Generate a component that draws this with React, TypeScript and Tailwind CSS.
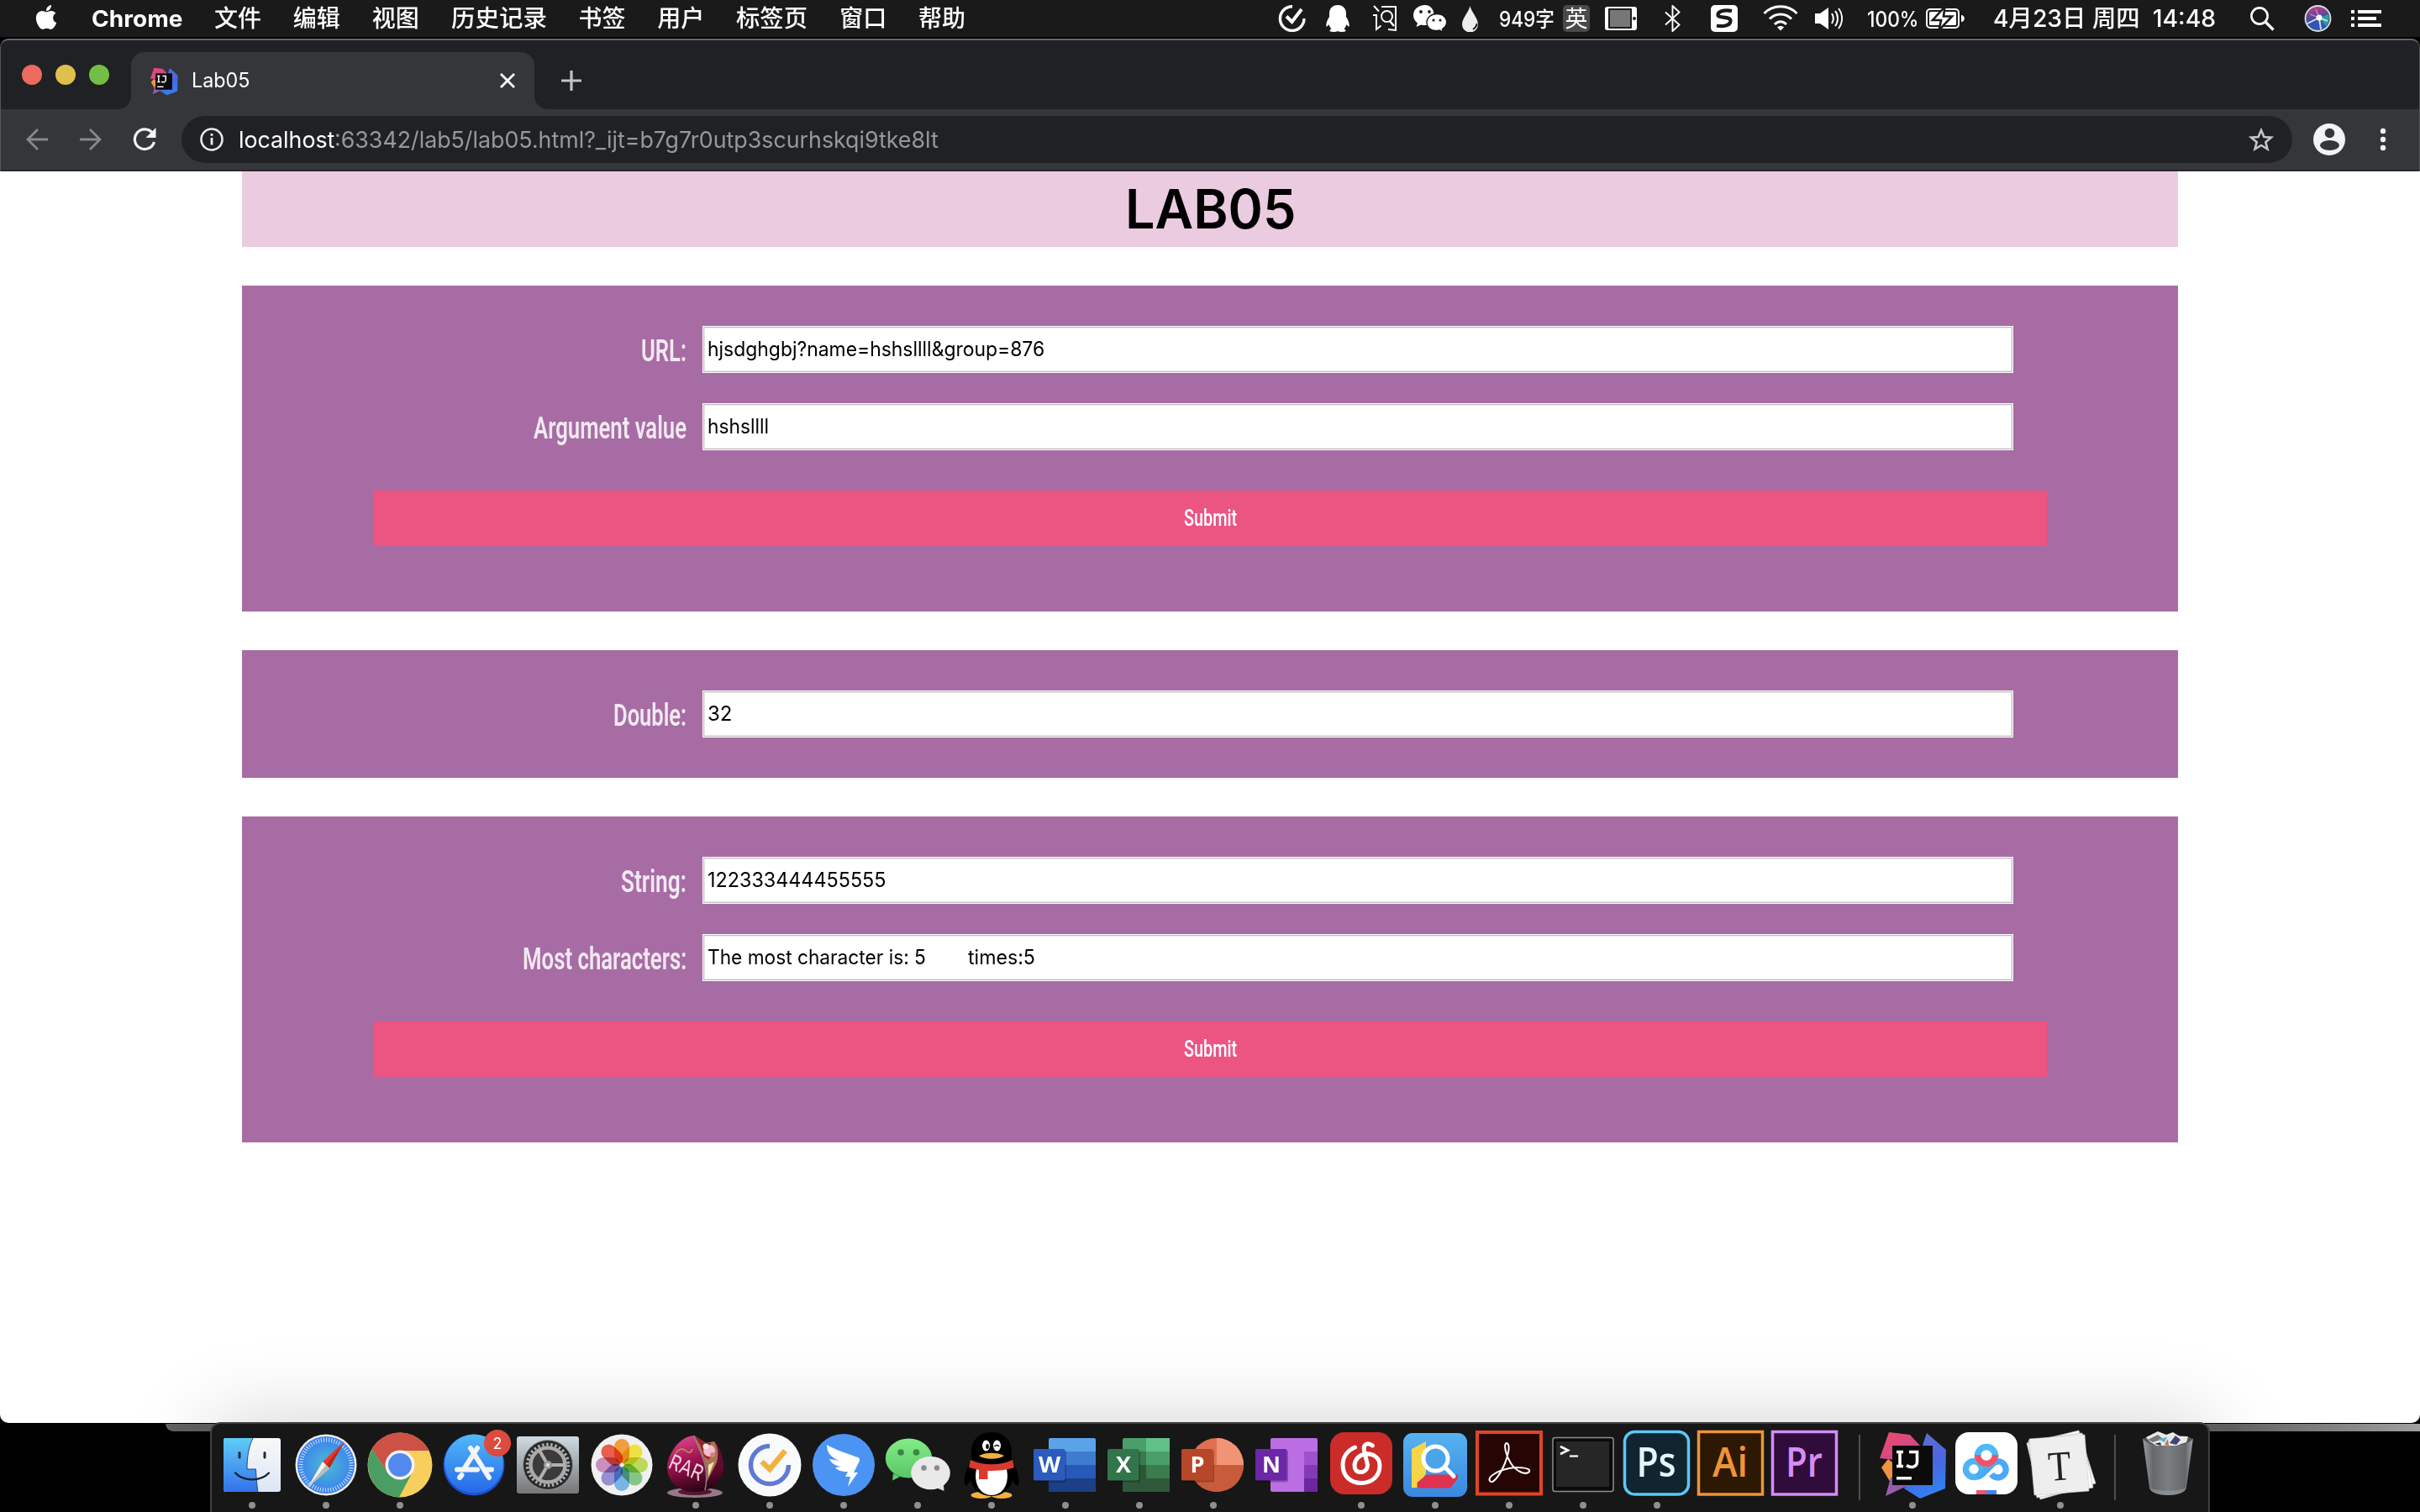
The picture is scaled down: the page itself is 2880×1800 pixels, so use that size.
import { useLayoutEffect, useRef, useState } from 'react';
import type { ReactNode } from 'react';
import { FaApple } from 'react-icons/fa';

/** Text stretched horizontally so that it fills a given width. */
function Fit({ w, children, className = '' }: { w: number; children: string; className?: string }) {
  const ref = useRef<HTMLSpanElement>(null);
  const [scale, setScale] = useState(1);
  useLayoutEffect(() => {
    if (ref.current) setScale(w / ref.current.offsetWidth);
  }, [w]);
  return (
    <span className="inline-block shrink-0 whitespace-pre" style={{ width: w }}>
      <span ref={ref} className={`inline-block origin-left ${className}`} style={{ transform: `scaleX(${scale})` }}>
        {children}
      </span>
    </span>
  );
}

/* ---------- Menu bar ---------- */

const menus: [string, number][] = [
  ['文件', 56], ['编辑', 56], ['视图', 56], ['历史记录', 114], ['书签', 56],
  ['用户', 56], ['标签页', 85], ['窗口', 56], ['帮助', 56],
];

function MenuBar() {
  return (
    <header className="flex h-11 shrink-0 items-center bg-[#1a1a1a] text-[28px] font-medium leading-none text-white">
      <FaApple className="-mt-1 ml-[39px] h-[33px] w-8 shrink-0" />
      <div className="ml-[38px] flex items-center gap-[37.9px]">
        <Fit w={108} className="text-[27px] font-bold">Chrome</Fit>
        {menus.map(([m, w]) => (
          <Fit key={m} w={w}>{m}</Fit>
        ))}
      </div>
      <div className="ml-auto flex items-center pr-[46px]">
        <svg className="h-8 w-[33px]" viewBox="0 0 33 32" fill="none" stroke="#fff">
          <path d="M17 1.8 A14.3 14.3 0 1 0 31 16" strokeWidth="3.4" />
          <path d="M10 13.5 L16.5 20 L28 5" strokeWidth="4" />
        </svg>
        <svg className="ml-6 h-8 w-7" viewBox="0 0 28 32" fill="#fff">
          <path d="M14 0 C7.5 0 4 4.5 4 10 L4 14 C2 17 0 21 .3 25.5 C1.5 26 3 24 3.6 23 C4.2 25.5 5 27 6.5 28.4 C4.6 29.3 4 30.5 5 31.5 C8 32.3 12 32 14 31 C16 32 20 32.3 23 31.5 C24 30.5 23.4 29.3 21.5 28.4 C23 27 23.8 25.5 24.4 23 C25 24 26.5 26 27.7 25.5 C28 21 26 17 24 14 L24 10 C24 4.5 20.5 0 14 0Z" />
        </svg>
        <svg className="ml-[27px] h-8 w-[30px]" viewBox="0 0 30 32" fill="none" stroke="#fff" strokeWidth="2">
          <path d="M2 1 L8 7.500 M1 12 H5 V29 L10.500 24.500 M11 2 H28 V30 L19 29" />
          <circle cx="17.500" cy="13.500" r="6.500" />
          <path d="M21 19 L26 25" strokeWidth="2.500" />
        </svg>
        <svg className="ml-[19px] h-8 w-10" viewBox="0 0 40 32">
          <path d="M14 0 C6 0 0 5 0 12 C0 16 2 19.500 5 21.500 L3.500 26 L9 23.500 C11 24 13 24.200 15 24 C28 24 28 0 14 0Z" fill="#fff" />
          <circle cx="9" cy="8" r="1.900" fill="#1a1a1a" /><circle cx="19" cy="8" r="1.900" fill="#1a1a1a" />
          <path d="M28 10.500 C21 10.500 16 15 16 20.500 C16 28 23 32 31 30 L35.500 32 L34.500 28.500 C44 22 39 10.500 28 10.500Z" fill="#fff" stroke="#1a1a1a" strokeWidth="1.400" />
          <circle cx="24" cy="18" r="1.600" fill="#1a1a1a" /><circle cx="32" cy="18" r="1.600" fill="#1a1a1a" />
        </svg>
        <svg className="ml-[18px] h-8 w-[19px]" viewBox="0 0 19 32">
          <path d="M9.500 1 C8 8 0 16 0 23 A9.300 9.300 0 0 0 19 23 C19 16 11 8 9.500 1Z" fill="#eee" />
          <path d="M13 29 C16 27 17.500 25 17.500 22" stroke="#1a1a1a" strokeWidth="2" fill="none" />
        </svg>
        <div className="ml-[25px] flex"><Fit w={66} className="text-[25px]">949字</Fit></div>
        <div className="ml-2.5 flex h-8 w-8 items-center justify-center rounded-[5px] bg-[#4a4a4a] text-[27px] font-normal">英</div>
        <svg className="ml-[18px] h-8 w-[38px]" viewBox="0 0 38 32">
          <rect x="0" y="2" width="38" height="28" rx="3" fill="#fff" />
          <rect x="4" y="4" width="28" height="24" rx="1" fill="#1a1a1a" />
          <rect x="6" y="6" width="24" height="20" fill="#777" />
          <circle cx="35" cy="16" r="2" fill="#1a1a1a" />
        </svg>
        <svg className="ml-[33px] h-8 w-[19px]" viewBox="0 0 19 32" fill="none" stroke="#fff" strokeWidth="1.900">
          <path d="M1 8.500 L17.500 23.500 L9.500 31 V1 L17.500 8.500 L1 23.500" />
        </svg>
        <svg className="ml-9 h-8 w-8" viewBox="0 0 32 32">
          <rect width="32" height="32" rx="5" fill="#fff" />
          <path d="M25 7 C15 5 8 8 8.500 12 C9 16 24 13 23.500 19 C23 25 14 26 7 24.500" stroke="#1a1a1a" strokeWidth="4.200" fill="none" />
        </svg>
        <svg className="ml-[30px] h-8 w-[42px]" viewBox="0 0 42 32" fill="none" stroke="#fff" strokeWidth="3">
          <path d="M1.500 10 C12 -1 30 -1 40.500 10 M8 16.500 C15 9 27 9 34 16.500 M14 23 C18 18.500 24 18.500 28 23" />
          <path d="M21 30.500 L17 26.500 C19 24.500 23 24.500 25 26.500Z" fill="#fff" stroke="none" />
        </svg>
        <svg className="ml-5 h-8 w-[33px]" viewBox="0 0 33 32" fill="none" stroke="#fff" strokeWidth="2">
          <path d="M0 10 H6 L16 3 V29 L6 22 H0Z" fill="#fff" stroke="none" />
          <path d="M20 10 C22.500 14 22.500 18 20 22 M24 7 C28 12 28 20 24 25 M28 4 C33.500 11 33.500 21 28 28" />
        </svg>
        <div className="ml-[29px] flex"><Fit w={61} className="text-[25px]">100%</Fit></div>
        <svg className="ml-[9px] h-8 w-[46px]" viewBox="0 0 46 32">
          <rect x="1" y="5" width="38" height="22" rx="4" fill="none" stroke="#fff" strokeWidth="2" />
          <rect x="4" y="8" width="32" height="16" rx="1.500" fill="#fff" />
          <path d="M42 12 C47 12 47 20 42 20Z" fill="#fff" />
          <path d="M22.500 2 L8 18 H18 L15.500 30 L31 13.500 H21Z" fill="#fff" stroke="#1a1a1a" strokeWidth="2.600" />
        </svg>
        <div className="ml-[34px] flex"><Fit w={265} className="text-[28px]">4月23日 周四  14:48</Fit></div>
        <svg className="ml-[41px] h-8 w-[29px]" viewBox="0 0 29 32" fill="none" stroke="#fff" strokeWidth="2.600">
          <circle cx="11" cy="13" r="9.600" />
          <path d="M18 20 L27.500 29.500" strokeWidth="3.200" />
        </svg>
        <svg className="ml-[35px] h-8 w-[33px]" viewBox="0 0 33 32">
          <defs>
            <linearGradient id="siri" x1="0.400" y1="0" x2="0.600" y2="1">
              <stop offset="0" stopColor="#c43a8c" /><stop offset="0.450" stopColor="#4a4c9c" /><stop offset="1" stopColor="#1d5fc0" />
            </linearGradient>
          </defs>
          <circle cx="16.500" cy="16" r="15" fill="url(#siri)" stroke="#ddd" strokeWidth="1.800" />
          <path d="M18 15 L29 11 C31 17 28 23 26 25Z" fill="#2f9d97" />
          <path d="M18 15 L4 22 M18 15 L20 29 M18 15 L28 19" stroke="#d8e4ff" strokeWidth="1.800" />
          <path d="M18 15 L14 5 M18 15 L7 11" stroke="#e88ac8" strokeWidth="1.200" />
          <circle cx="18" cy="15" r="3.500" fill="#fff" />
        </svg>
        <svg className="ml-[23px] h-8 w-9" viewBox="0 0 36 32" fill="#fff">
          <path d="M0 6h4v4H0z M8 6h28v4H8z M0 14h4v4H0z M8 14h22v4H8z M0 22h4v4H0z M8 22h28v4H8z" />
        </svg>
      </div>
    </header>
  );
}

/* ---------- Browser chrome ---------- */

function IdeaLogo({ className }: { className: string }) {
  return (
    <svg className={className} viewBox="-44 -48 88 92">
      <defs>
        <linearGradient id="ijBlue" x1="0.300" y1="0" x2="0.600" y2="1">
          <stop offset="0" stopColor="#5f6fd0" /><stop offset="0.500" stopColor="#4a66e0" /><stop offset="1" stopColor="#2f83f2" />
        </linearGradient>
        <linearGradient id="ijRed" x1="0" y1="0" x2="1" y2="1">
          <stop offset="0" stopColor="#f5496b" /><stop offset="1" stopColor="#b24a9c" />
        </linearGradient>
        <linearGradient id="ijPurple" x1="0" y1="1" x2="1" y2="0">
          <stop offset="0" stopColor="#a55bb0" /><stop offset="1" stopColor="#7c5aa8" />
        </linearGradient>
      </defs>
      <path d="M-37 3 L-29 -7 L-20 0 V24 L-26 21Z" fill="#ef9440" />
      <path d="M17 -38 L40 -18 L39 28 L9 40 L-10 28 L4 0Z" fill="url(#ijBlue)" />
      <path d="M-28 -39 L-3 -36 L10 -22 L4 0 L-20 -6 L-39 -8Z" fill="url(#ijRed)" />
      <path d="M-26 15 L-32 37 L0 22 V10Z" fill="url(#ijPurple)" />
      <rect x="-24" y="-23" width="48" height="47" fill="#0b0b0b" />
      <path d="M-19 -15.500 H-11 M-15 -15.500 V1.500 M-19 1.500 H-11 M-4 -15.500 H5.500 V-4 C5.500 3 -2 4 -7 0.500" fill="none" stroke="#fff" strokeWidth="3.600" />
      <rect x="-19" y="14" width="18" height="3.500" fill="#fff" />
    </svg>
  );
}

function BrowserChrome() {
  return (
    <div className="flex h-[158px] shrink-0 flex-col rounded-t-[10px] border-x border-t-2 border-x-[#55565a] border-t-[#666] bg-[#202124]">
      <div className="flex h-[82px] shrink-0">
        <div className="mt-[29px] ml-[25px] flex gap-4">
          <span className="size-6 rounded-full bg-[#ed6a5e]" />
          <span className="size-6 rounded-full bg-[#e0c04c]" />
          <span className="size-6 rounded-full bg-[#72be47]" />
        </div>
        <div className="mt-3.5 ml-2.5 flex">
          <svg className="mt-[52px] size-4" viewBox="0 0 16 16"><path d="M16 0 V16 H0 A16 16 0 0 0 16 0Z" fill="#35363a" /></svg>
          <div className="flex h-[70px] w-[480px] items-center rounded-t-2xl bg-[#35363a] pr-[23px] pl-5 pb-0.5 text-2xl leading-none text-white">
            <IdeaLogo className="size-[38px]" />
            <div className="ml-[14px] flex"><Fit w={69}>Lab05</Fit></div>
            <svg className="ml-auto size-[18px]" viewBox="0 0 18 18" stroke="#fff" strokeWidth="2.800"><path d="M1 1 L17 17 M17 1 L1 17" /></svg>
          </div>
          <svg className="mt-[52px] size-4" viewBox="0 0 16 16"><path d="M0 0 V16 H16 A16 16 0 0 1 0 0Z" fill="#35363a" /></svg>
        </div>
        <svg className="mt-9 ml-4 size-6" viewBox="0 0 24 24" stroke="#c3c4c7" strokeWidth="3.200"><path d="M12 0 V24 M0 12 H24" /></svg>
      </div>
      <div className="flex h-[74px] shrink-0 items-center border-b-2 border-[#28292c] bg-[#35363a]">
        <svg className="ml-[30px] size-[26px]" viewBox="0 0 26 26" fill="none" stroke="#87888b" strokeWidth="2.800"><path d="M26 13 H2 M14 1 L2 13 L14 25" /></svg>
        <svg className="ml-[38px] size-[26px]" viewBox="0 0 26 26" fill="none" stroke="#87888b" strokeWidth="2.800"><path d="M0 13 H24 M12 1 L24 13 L12 25" /></svg>
        <svg className="ml-[37px] size-[28px]" viewBox="0 0 28 28" fill="none" stroke="#f1f3f4" strokeWidth="3.200">
          <path d="M23.500 6.500 A11.800 11.800 0 1 0 25.500 17" />
          <path d="M27.500 0 V12 H15.500Z" fill="#f1f3f4" stroke="none" />
        </svg>
        <div className="ml-[30px] flex h-14 w-[2512px] items-center rounded-full bg-[#202124] pr-[22px] pl-[22px] text-[27px] leading-none">
          <svg className="size-7" viewBox="0 0 28 28" fill="none" stroke="#e8eaed" strokeWidth="2.600">
            <circle cx="14" cy="14" r="12.500" /><path d="M14 12 V20.500 M14 7 V9.800" strokeWidth="2.800" />
          </svg>
          <div className="ml-[18px] flex">
            <Fit w={114} className="text-white">localhost</Fit>
            <Fit w={719} className="text-[#97989b]">:63342/lab5/lab05.html?_ijt=b7g7r0utp3scurhskqi9tke8lt</Fit>
          </div>
          <svg className="ml-auto h-7 w-[30px]" viewBox="0 0 30 28" fill="none" stroke="#c3c4c7" strokeWidth="2.600">
            <path d="M15 3 L18.400 11 L27 11.600 L20.300 17.200 L22.500 25.500 L15 21 L7.500 25.500 L9.700 17.200 L3 11.600 L11.600 11Z" />
          </svg>
        </div>
        <svg className="ml-[25px] size-[38px]" viewBox="0 0 38 38">
          <circle cx="19" cy="19" r="19" fill="#f1f3f4" />
          <circle cx="19.500" cy="11.500" r="5.800" fill="#35363a" />
          <ellipse cx="19.500" cy="26" rx="11.500" ry="6" fill="#35363a" />
        </svg>
        <svg className="ml-[41px] h-7 w-2" viewBox="0 0 8 28" fill="#f1f3f4"><circle cx="4" cy="4" r="3.200" /><circle cx="4" cy="14" r="3.200" /><circle cx="4" cy="24" r="3.200" /></svg>
      </div>
    </div>
  );
}

/* ---------- Page ---------- */

function Field({ label, labelWidth, children }: { label: string; labelWidth: number; children: ReactNode }) {
  return (
    <div className="flex h-14 items-center">
      <div className="mt-[3px] flex w-[529px] justify-end font-[Roboto] text-[37px] leading-none font-semibold text-[#f1e9f1]">
        <Fit w={labelWidth}>{label}</Fit>
      </div>
      <div className="ml-[19px] flex h-14 w-[1560px] items-center border border-white bg-white pb-px pl-[5px] text-[24px] leading-none text-black shadow-[inset_0_0_0_1px_#bdbdbd,inset_0_0_0_2px_#ebebeb]">
        {children}
      </div>
    </div>
  );
}

function SubmitButton() {
  return (
    <button className="mt-3 ml-[156px] flex h-[66px] w-[1992px] items-center justify-center bg-[#ec5482] font-[Roboto] text-[28px] leading-none font-medium text-white">
      <Fit w={63}>Submit</Fit>
    </button>
  );
}

function Page() {
  return (
    <main className="flex h-[1490px] flex-col gap-[46px] rounded-b-[10px] bg-white px-72">
      <h1 className="flex h-[90px] items-center justify-center bg-[#ebcbdf] text-[64px] leading-none text-black">
        <Fit w={203} className="font-semibold">LAB05</Fit>
      </h1>
      <section className="flex flex-col gap-9 bg-[#a86ca4] pt-12 pb-[78px]">
        <Field label="URL:" labelWidth={54}><Fit w={401}>hjsdghgbj?name=hshsllll&group=876</Fit></Field>
        <Field label="Argument value" labelWidth={182}><Fit w={73}>hshsllll</Fit></Field>
        <SubmitButton />
      </section>
      <section className="flex flex-col bg-[#a86ca4] py-12">
        <Field label="Double:" labelWidth={87}><Fit w={29}>32</Fit></Field>
      </section>
      <section className="flex flex-col gap-9 bg-[#a86ca4] pt-12 pb-[78px]">
        <Field label="String:" labelWidth={78}><Fit w={212}>122333444455555</Fit></Field>
        <Field label="Most characters:" labelWidth={195}>
          <Fit w={260}>The most character is: 5</Fit>
          <div className="ml-[50px] flex"><Fit w={80}>times:5</Fit></div>
        </Field>
        <SubmitButton />
      </section>
    </main>
  );
}

/* ---------- Dock ---------- */

const V = '-44 -48 88 92';
const box = 'h-[92px] w-[88px] shrink-0';

const Finder = () => (
  <svg className={box} viewBox={V}>
    <defs>
      <linearGradient id="fL" x1="0" y1="0" x2="0" y2="1"><stop offset="0" stopColor="#5fcdf8" /><stop offset="1" stopColor="#3372ea" /></linearGradient>
      <linearGradient id="fR" x1="0" y1="0" x2="0" y2="1"><stop offset="0" stopColor="#f8f8f8" /><stop offset="1" stopColor="#dce7f5" /></linearGradient>
    </defs>
    <rect x="-34" y="-32" width="68" height="64" rx="3" fill="url(#fR)" />
    <path d="M1 -32 H-31 Q-34 -32 -34 -29 V29 Q-34 32 -31 32 H7 C5.500 24 5 15 4.500 5 H-6 C-6 -10 -4 -22 1 -32Z" fill="url(#fL)" />
    <path d="M1 -32 C-4 -22 -6 -10 -6 5 H4.500 C5 15 5.500 24 7 32" fill="none" stroke="#1d4b80" strokeWidth="1" />
    <path d="M-15 -14.500 V-9 M15 -14.500 V-9" stroke="#1b2a38" strokeWidth="3" strokeLinecap="round" />
    <path d="M-20 9.500 C-10 20 10 20 20 9.500" fill="none" stroke="#16202b" strokeWidth="2.400" strokeLinecap="round" />
  </svg>
);

const Safari = () => (
  <svg className={box} viewBox={V}>
    <defs><radialGradient id="sf"><stop offset="0" stopColor="#4dbcd0" /><stop offset="1" stopColor="#3a7ff0" /></radialGradient></defs>
    <circle r="36.500" fill="#ececec" /><circle r="34" fill="url(#sf)" />
    <circle r="30" fill="none" stroke="#cfe6fb" strokeWidth="5" strokeDasharray="1 2.140" />
    <path d="M22 -28 L-4 -4 L4 4Z" fill="#e5392f" /><path d="M22 -28 L4 4 L0 0Z" fill="#b92920" />
    <path d="M-22 27 L-4 -4 L4 4Z" fill="#f4f4f4" /><path d="M-22 27 L0 0 L4 4Z" fill="#bbb" />
  </svg>
);

const Chrome = () => (
  <svg className={box} viewBox={V}>
    <circle r="38.500" fill="#f8cf5c" />
    <path d="M-33 -19 A38.500 38.500 0 0 0 -1 38.500 L15 8.500 L0 17 L-15 8.500Z" fill="#4a9e63" />
    <path d="M-33.300 -19.250 A38.500 38.500 0 0 1 34.500 -17 H0 L-15 8.500Z" fill="#cd5145" />
    <circle r="17.500" fill="#f4f4f4" /><circle r="14" fill="#5489ee" />
  </svg>
);

const AppStore = () => (
  <svg className={box} viewBox={V}>
    <defs><linearGradient id="as" x1="0" y1="0" x2="0" y2="1"><stop offset="0" stopColor="#51b9f8" /><stop offset="1" stopColor="#2668ea" /></linearGradient></defs>
    <circle r="36.500" fill="#1b50cf" /><circle cy="-1.500" r="35" fill="url(#as)" />
    <g stroke="#f2f4f8" strokeWidth="6" strokeLinecap="round">
      <path d="M4 -20 L-12 5 M-4 -20 L18 15 M-20 5.500 H4 M14 5.500 H21 M-14.500 12 L-17 15" />
    </g>
    <circle cx="28" cy="-26" r="16" fill="#dd4a3e" />
    <text x="28" y="-19.500" textAnchor="middle" fontSize="18" fill="#fff" fontFamily="Inter">2</text>
  </svg>
);

const Settings = () => (
  <svg className={box} viewBox={V}>
    <defs><linearGradient id="st" x1="0" y1="0" x2="0" y2="1"><stop offset="0" stopColor="#cfdbe3" /><stop offset="1" stopColor="#767675" /></linearGradient></defs>
    <rect x="-37" y="-34" width="74" height="68" rx="3" fill="url(#st)" />
    <circle r="29.500" fill="#2a2a2a" stroke="#8d959c" strokeWidth="1" />
    <circle r="24.500" fill="none" stroke="#b4b4b4" strokeWidth="3.500" strokeDasharray="2.500 2.630" />
    <circle r="20.500" fill="#3b3b3b" stroke="#aaa" strokeWidth="4.500" />
    <path d="M0 0 L21 0 M0 0 L-10.500 -18 M0 0 L-10.500 18" stroke="#b0b0b0" strokeWidth="4" />
    <circle r="5" fill="#999" /><circle r="2.200" fill="#ddd" />
  </svg>
);

const petals: [number, string][] = [
  [0, '#f2932a'], [45, '#f0dd2f'], [90, '#b5d64a'], [135, '#79c17c'], [180, '#6aaee6'], [225, '#8a86cc'], [270, '#c485b8'], [315, '#e64f3c'],
];
const Photos = () => (
  <svg className={box} viewBox={V}>
    <circle r="36.500" fill="#f0f0f0" />
    <g className="isolate">
      {petals.map(([a, c]) => (
        <rect key={a} className="mix-blend-multiply" x="-9" y="-31" width="18" height="29" rx="9" fill={c} opacity="0.900" transform={`rotate(${a})`} />
      ))}
    </g>
    <circle r="2" fill="#fff" />
  </svg>
);

const Rar = () => (
  <svg className={box} viewBox={V}>
    <defs>
      <linearGradient id="rr" x1="0.200" y1="0" x2="0.500" y2="1"><stop offset="0" stopColor="#e04a92" /><stop offset="0.450" stopColor="#a01253" /><stop offset="1" stopColor="#2c0314" /></linearGradient>
    </defs>
    <ellipse cx="-1" cy="33" rx="33" ry="6" fill="#9a7686" /><ellipse cx="-1" cy="32" rx="20" ry="4" fill="#4d1a30" />
    <path d="M-2 -35 C-20 -34 -34 -12 -34 3 C-34 20 -20 32 -1 32 C18 32 33 20 33 3 C33 -10 28 -22 22 -28 L12 -26Z" fill="url(#rr)" />
    <path d="M-2 -35 L12 -26 L22 -28 C28 -20 27 -8 25 -3 L13 20 C15 5 10 -10 4 -18Z" fill="#a8744f" />
    <path d="M-2 -35 L5 -24 L10 -10 L16 -6 L18 -26 L12 -26Z" fill="#9c2028" />
    <path d="M25 -3 C22 8 16 18 13 24 C17 16 19 8 33 3 C33 -10 28 -22 22 -28 C28 -20 27 -8 25 -3Z" fill="#5c0d30" />
    <path d="M-2 -35 C2 -20 18 0 11 30" fill="none" stroke="#8d8088" strokeWidth="1.500" />
    <circle cx="16" cy="-17" r="7" fill="#f3bcc9" /><circle cx="12" cy="-22" r="3.500" fill="#fbe3e8" /><circle cx="20" cy="-12" r="3" fill="#dd7890" />
    <path d="M15 0 L22 -4 L15 14Z" fill="#f3e3b8" />
    <path d="M-24 -14 Q-18 -22 -12 -17 T-4 -19" fill="none" stroke="#b6a23b" strokeWidth="1.500" />
    <g transform="translate(-34 3) rotate(23)"><text x="0" y="0" fontSize="25" textLength="42" lengthAdjust="spacingAndGlyphs" fontFamily="Inter" fill="#f3cfe0">RAR</text></g>
  </svg>
);

const Tick = () => (
  <svg className={box} viewBox={V}>
    <circle r="37.500" fill="#f9fafb" />
    <path d="M0 -22.500 A22.500 22.500 0 1 0 22.500 0" fill="none" stroke="#6079d4" strokeWidth="5.500" />
    <path d="M-9.500 -4 L0 5 L18.500 -17" fill="none" stroke="#f3b03f" strokeWidth="6.500" />
  </svg>
);

const Ding = () => (
  <svg className={box} viewBox={V}>
    <circle r="37" fill="#4c94f3" />
    <path d="M-20 -24 C-8 -17 6 -13 17 -9 Q20 -8 18.500 -4 L12 9 H17 L5 26 L8 14 H2 L5 8 C-3 8 -8 6 -10 3 L-3 2 C-11 1 -15 -3 -17 -7 L-5 -5 C-15 -9 -20 -14 -20 -24Z" fill="#fff" />
  </svg>
);

const WeChat = () => (
  <svg className={box} viewBox={V}>
    <defs><linearGradient id="wc" x1="0" y1="0" x2="0" y2="1"><stop offset="0" stopColor="#85ec87" /><stop offset="1" stopColor="#57c766" /></linearGradient></defs>
    <path d="M-29 10 L-30 18.500 L-21 14Z" fill="#5ccb6b" />
    <ellipse cx="-10.500" cy="-8" rx="27.700" ry="23.500" fill="url(#wc)" />
    <circle cx="-20" cy="-15" r="3.800" fill="#3b8547" /><circle cx="-1.500" cy="-15" r="3.800" fill="#3b8547" />
    <path d="M31 24 L31.500 31 L22 27Z" fill="#ddd" />
    <ellipse cx="15.500" cy="9.500" rx="23.300" ry="19.700" fill="#e9e9e9" />
    <circle cx="7.500" cy="3.500" r="3.200" fill="#8b8b8b" /><circle cx="23" cy="3.500" r="3.200" fill="#8b8b8b" />
  </svg>
);

const Qq = () => (
  <svg className={box} viewBox={V}>
    <ellipse cx="-12" cy="36" rx="12.500" ry="4" fill="#efb040" /><ellipse cx="12" cy="36" rx="12.500" ry="4" fill="#efb040" />
    <path d="M0 -39 C-17 -39 -24 -27 -24 -15 V-6 C-29 2 -34 14 -32 24 C-29 26 -26 20 -25 18 C-22 30 -12 37 0 37 C12 37 22 30 25 18 C26 20 29 26 32 24 C34 14 29 2 24 -6 V-15 C24 -27 17 -39 0 -39Z" fill="#000" />
    <path d="M-18 5 H18 C22 24 12 36 0 36 C-12 36 -22 24 -18 5Z" fill="#fff" />
    <ellipse cx="-6.500" cy="-23" rx="4.500" ry="6.500" fill="#fff" /><ellipse cx="6.500" cy="-23" rx="4.500" ry="6.500" fill="#fff" />
    <ellipse cx="-5" cy="-22" rx="1.800" ry="3" fill="#000" /><path d="M3.500 -22 Q6.500 -25 9 -22" stroke="#000" strokeWidth="1.500" fill="none" />
    <path d="M-15 -11 C-8 -15.500 8 -15.500 15 -11 C8 -6 -8 -6 -15 -11Z" fill="#f0b13c" />
    <path d="M-25 -6 C-10 1 10 1 25 -6 L27 3 C18 6 10 7 -4.500 7 V17 H-15 V6 L-27 3Z" fill="#d83a30" />
  </svg>
);

function OfficeTile({ letter, front, children }: { letter: string; front: string; children: ReactNode }) {
  return (
    <svg className={box} viewBox={V}>
      {children}
      <rect x="-37" y="-17.500" width="38" height="38" rx="2" fill="#000" opacity="0.250" />
      <rect x="-38" y="-19" width="37.500" height="37.500" rx="2" fill={front} />
      <text x="-19" y="9.300" textAnchor="middle" fontSize="27" fontWeight="700" fill="#fff" fontFamily="Open Sans">{letter}</text>
    </svg>
  );
}

const Word = () => (
  <OfficeTile letter="W" front="#2b5cbd">
    <rect x="-20" y="-32" width="56" height="64" rx="2" fill="#5ba3e9" />
    <rect x="-20" y="-16" width="56" height="16" fill="#3f7ccf" /><rect x="-20" y="0" width="56" height="16" fill="#2759b8" />
    <path d="M-20 16 H36 V30 Q36 32 34 32 H-18 Q-20 32 -20 30Z" fill="#1c3f86" />
  </OfficeTile>
);
const Excel = () => (
  <OfficeTile letter="X" front="#33754a">
    <rect x="-20" y="-32" width="56" height="64" rx="2" fill="#4b9e69" />
    <rect x="8" y="-32" width="28" height="16" fill="#62c089" /><rect x="-20" y="-16" width="28" height="16" fill="#387a4b" />
    <rect x="-20" y="0" width="28" height="16" fill="#2b5638" /><rect x="8" y="0" width="28" height="16" fill="#3a7c4c" />
    <path d="M-20 16 H36 V30 Q36 32 34 32 H-18 Q-20 32 -20 30Z" fill="#2d593a" />
  </OfficeTile>
);
const PowerPoint = () => (
  <OfficeTile letter="P" front="#b8472a">
    <circle cx="4" r="32" fill="#df7150" />
    <path d="M4 -32 A32 32 0 0 1 36 0 H4Z" fill="#f19475" /><path d="M36 0 A32 32 0 0 1 -28 0Z" fill="#c85b3a" />
  </OfficeTile>
);
const OneNote = () => (
  <OfficeTile letter="N" front="#6b27a5">
    <rect x="-20" y="-32" width="56" height="64" rx="2" fill="#bb6ee4" />
    <rect x="20" y="-16" width="16" height="16" fill="#9f52cc" /><rect x="20" y="0" width="16" height="16" fill="#8539b8" />
    <path d="M20 16 H36 V30 Q36 32 34 32 H20Z" fill="#6b27a0" />
  </OfficeTile>
);

const Netease = () => (
  <svg className={box} viewBox={V}>
    <rect x="-37" y="-39" width="74" height="74" rx="17" fill="#cb2b29" />
    <path d="M-7.500 -21 C-17 -17 -22 -9 -22 0 C-22 13 -13 21.500 0 21.500 C13 21.500 22 13 22 1 C22 -9 14 -14 5 -13 C-3 -12 -8 -6 -8 1 C-8 6 -5 8.500 -1 8.500 C4 8.500 7.500 5 7.500 0 L3.500 -17 C2 -24 7 -28 13.500 -23" fill="none" stroke="#fff" strokeWidth="5" strokeLinecap="round" />
  </svg>
);

const Browse = () => (
  <svg className={box} viewBox={V}>
    <defs><linearGradient id="bs" x1="0" y1="0" x2="0" y2="1"><stop offset="0" stopColor="#57b2f0" /><stop offset="1" stopColor="#3a88e0" /></linearGradient></defs>
    <rect x="-38" y="-38" width="76" height="76" rx="11" fill="url(#bs)" />
    <path d="M-28 -19 L-11 -28 V10 L-21 27 H-28Z" fill="#f5d649" />
    <path d="M-21.500 21 L-10 11.500 H27 V16 L18 27.500 H-21.500Z" fill="#e0314f" />
    <circle cx="0.500" cy="-7.500" r="14.500" fill="#4ba3e8" stroke="#fff" strokeWidth="5" />
    <path d="M12 3 L22 13.500" stroke="#fff" strokeWidth="5" strokeLinecap="round" />
  </svg>
);

const Acrobat = () => (
  <svg className={box} viewBox={V}>
    <rect x="-38" y="-39" width="76" height="73.500" fill="#260604" stroke="#e04527" strokeWidth="4" />
    <path d="M-23 19 C-19 24 -10 10 -5 -2 C-1 -12 2 -25 -3 -26 C-7 -25 -4 -11 2 -2 C8 7 19 13 24 8 C26 3 10 2 0 4 C-14 7 -26 14 -23 19Z" fill="none" stroke="#fff" strokeWidth="2" />
  </svg>
);

const Terminal = () => (
  <svg className={box} viewBox={V}>
    <rect x="-36" y="-32.500" width="72" height="64" rx="2.500" fill="#0a0a0a" stroke="#8a9093" strokeWidth="1.500" />
    <rect x="-32" y="-28" width="63" height="54" fill="#262626" />
    <path d="M-27 -22 L-18 -17.500 L-27 -13" fill="none" stroke="#fff" strokeWidth="2.600" />
    <path d="M-16 -10.500 H-6" stroke="#fff" strokeWidth="2.200" />
  </svg>
);

function AdobeTile({ label, bg, fg, rx, w }: { label: string; bg: string; fg: string; rx: number; w: number }) {
  return (
    <svg className={box} viewBox={V}>
      <rect x="-38.500" y="-39.500" width="76" height="74.500" rx={rx} fill={bg} stroke={fg} strokeWidth="3.500" />
      <text x="-1" y="13.500" textAnchor="middle" fontSize="49" textLength={w} lengthAdjust="spacingAndGlyphs" fontWeight="600" fill={label === 'Ps' ? '#e4f5fd' : fg} fontFamily="Open Sans">{label}</text>
    </svg>
  );
}
const Photoshop = () => <AdobeTile label="Ps" bg="#10252f" fg="#5bc8f5" rx={12} w={47} />;
const Illustrator = () => <AdobeTile label="Ai" bg="#2d1803" fg="#ee9437" rx={0} w={42} />;
const Premiere = () => <AdobeTile label="Pr" bg="#300c3b" fg="#d68cf5" rx={0} w={44} />;

const NetDisk = () => (
  <svg className={box} viewBox={V}>
    <rect x="-37" y="-39" width="74" height="74" rx="16" fill="#fff" />
    <g fill="none" strokeWidth="7.500">
      <circle cx="-15" cy="5" r="9.500" stroke="#4eb4f4" />
      <path d="M6 11 A9.500 9.500 0 1 0 12 -4 C7 -3 5 2 -2 8 Q-6 13 -11 14" stroke="#4ba8f6" />
      <circle cx="0" cy="-11" r="10.500" stroke="#4eb9f7" />
      <path d="M-10.500 -12 A10.500 10.500 0 0 0 10.500 -12" stroke="#ee5468" />
    </g>
    <rect x="-12" y="30" width="12" height="5" fill="#ee5468" /><rect x="0" y="30" width="12" height="5" fill="#3f86f0" />
  </svg>
);

const Typora = () => (
  <svg className={box} viewBox={V}>
    <path d="M-40 -26 L22 -41 L42 22 L-24 41Z" fill="#fff" stroke="#bbb" strokeWidth="0.800" />
    <path d="M-38 -29 L26 -38 L39 27 L-28 39Z" fill="#fafafa" stroke="#bbb" strokeWidth="0.800" />
    <path d="M-37 -31 L29 -36 L34 31 L-31 36Z" fill="#eee" stroke="#ccc" strokeWidth="0.600" />
    <g transform="rotate(-4)"><text x="-1" y="18" textAnchor="middle" fontSize="50" textLength="27" lengthAdjust="spacingAndGlyphs" fontFamily="Liberation Serif" fill="#222">T</text></g>
  </svg>
);

const Trash = () => (
  <svg className={box} viewBox={V}>
    <defs>
      <linearGradient id="tr" x1="0" y1="0" x2="1" y2="0"><stop offset="0" stopColor="#9a9fa3" /><stop offset="0.200" stopColor="#66696c" /><stop offset="0.500" stopColor="#7b7f82" /><stop offset="0.850" stopColor="#64686b" /><stop offset="1" stopColor="#a3a8ab" /></linearGradient>
    </defs>
    <ellipse cx="0" cy="-30" rx="29.500" ry="6" fill="#555" />
    <path d="M-30 -32 C-26 -20 26 -20 30 -32 L22 27 C20 39 -20 39 -22 27Z" fill="url(#tr)" />
    <path d="M-22 27 C-15 32 15 32 22 27 C20 39 -20 39 -22 27Z" fill="#9ea3a7" opacity="0.500" />
    <path d="M-26 -33 L-12 -40 L-2 -36 L6 -39 L14 -34 L24 -34 L22 -27 L10 -23 H-14 L-22 -28Z" fill="#e8e8e8" />
    <path d="M-24 -30 L-12 -36 L-6 -31 L-18 -27Z" fill="#777" /><path d="M-12 -31 L-1 -33 L-4 -27Z" fill="#55b4d6" />
    <path d="M2 -26 L9 -35 L15 -30 L10 -24Z" fill="#3d4775" /><path d="M-4 -24 L0 -31 L1 -23Z" fill="#c97040" /><path d="M-16 -25 L-9 -27 L-8 -23Z" fill="#333" />
  </svg>
);

type Entry = [() => ReactNode, boolean];
const mainApps: Entry[] = [
  [Finder, true], [Safari, true], [Chrome, true], [AppStore, false], [Settings, false], [Photos, false],
  [Rar, true], [Tick, true], [Ding, true], [WeChat, true], [Qq, true], [Word, true], [Excel, true],
  [PowerPoint, true], [OneNote, false], [Netease, true], [Browse, true], [Acrobat, true], [Terminal, true],
  [Photoshop, true], [Illustrator, false], [Premiere, false],
];
const Idea = () => <IdeaLogo className={box} />;
const recentApps: Entry[] = [[Idea, true], [NetDisk, false], [Typora, true]];

function DockItem({ entry: [Icon, running] }: { entry: Entry }) {
  return (
    <div className="flex w-[88px] shrink-0 flex-col items-center">
      <Icon />
      {running && <span className="size-2 rounded-full bg-[#8f8f8f]" />}
    </div>
  );
}

const Separator = () => <div className="mt-3 mr-[18px] ml-5 h-[78px] w-0.5 shrink-0 bg-[#4e4e4e]" />;

function Dock() {
  return (
    <nav className="absolute top-[1693px] left-[250px] flex h-[120px] w-[2380px] rounded-t-xl border-2 border-[#3f4040] bg-[#171717] pt-px pl-1 shadow-[0_0_100px_rgba(0,0,0,0.18)]">
      {mainApps.map((e, i) => <DockItem key={i} entry={e} />)}
      <Separator />
      {recentApps.map((e, i) => <DockItem key={i} entry={e} />)}
      <Separator />
      <DockItem entry={[Trash, false]} />
    </nav>
  );
}

export default function App() {
  return (
    <div className="relative flex h-[1800px] w-[2880px] flex-col overflow-hidden bg-black font-[Inter,'Noto_Sans_CJK_SC',sans-serif]">
      <MenuBar />
      <div className="mt-0.5 flex flex-col">
        <BrowserChrome />
        <Page />
      </div>
      <div className="mt-px flex h-[9px] justify-between">
        <div className="ml-[197px] w-[100px] rounded-bl-[9px] bg-[#616161]" />
        <div className="w-[280px] bg-linear-to-r from-[#626262] from-20% to-[#a0a0a0]" />
      </div>
      <Dock />
    </div>
  );
}
